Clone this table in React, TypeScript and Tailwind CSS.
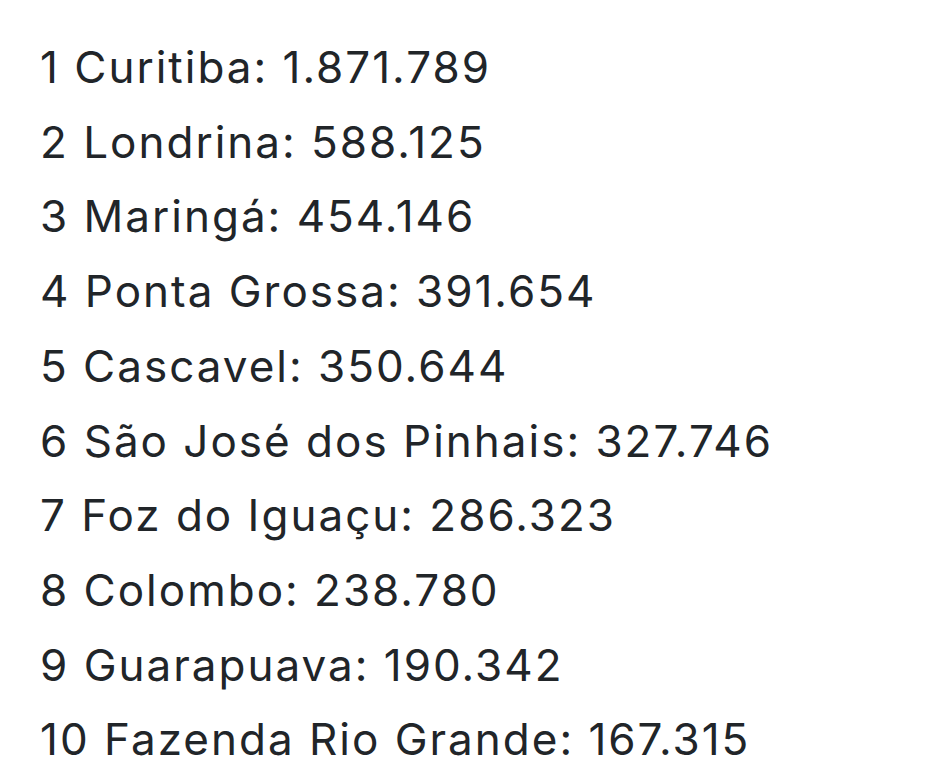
const items = [
  '1 Curitiba: 1.871.789',
  '2 Londrina: 588.125',
  '3 Maringá: 454.146',
  '4 Ponta Grossa: 391.654',
  '5 Cascavel: 350.644',
  '6 São José dos Pinhais: 327.746',
  '7 Foz do Iguaçu: 286.323',
  '8 Colombo: 238.780',
  '9 Guarapuava: 190.342',
  '10 Fazenda Rio Grande: 167.315',
];

export default function App() {
  return (
    <div className="min-h-screen bg-white pl-[40px] pt-[30px] text-[#212529] font-['Inter',sans-serif]">
      {items.map((t) => (
        <p key={t} className="text-[44px] leading-[74.7px] tracking-[2px] whitespace-nowrap">
          {t}
        </p>
      ))}
    </div>
  );
}
